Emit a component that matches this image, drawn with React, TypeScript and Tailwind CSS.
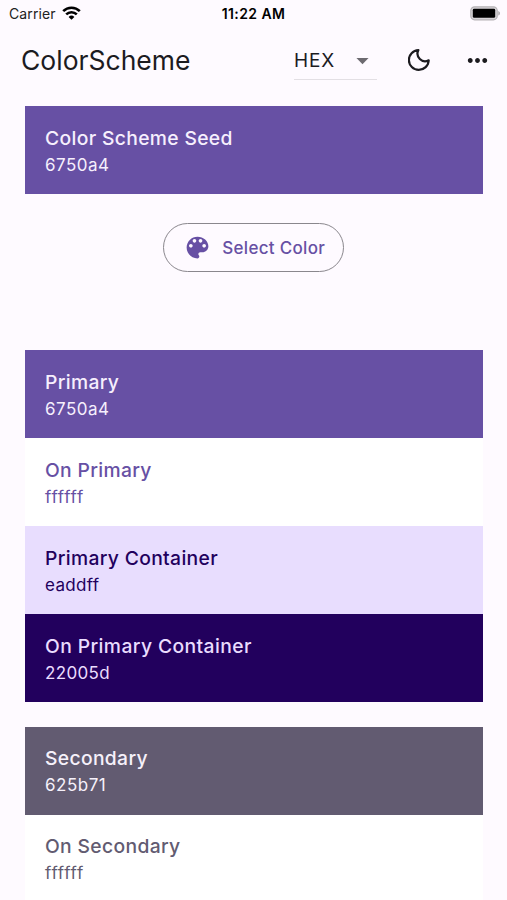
import { MdArrowDropDown, MdMoreHoriz } from "react-icons/md";

type Swatch = { label: string; hex: string; tone: string; spacing?: string; hexSpacing?: string; inset?: string };

const seed: Swatch = { label: "Color Scheme Seed", hex: "6750a4", tone: "bg-[#6750a4] text-[#f6effd]", hexSpacing: "tracking-[0.5px]" };

const primary: Swatch[] = [
  { label: "Primary", hex: "6750a4", tone: "bg-[#6750a4] text-[#f6effd]", hexSpacing: "tracking-[0.5px]" },
  { label: "On Primary", hex: "ffffff", tone: "bg-white text-[#6750a4]", hexSpacing: "tracking-[0.75px]" },
  { label: "Primary Container", hex: "eaddff", tone: "bg-[#e8ddfe] text-[#22005d]" },
  { label: "On Primary Container", hex: "22005d", tone: "bg-[#22005d] text-[#eaddff]", spacing: "tracking-[0.4px]" },
];

const secondary: Swatch[] = [
  { label: "Secondary", hex: "625b71", tone: "bg-[#625b71] text-[#f6f1fa]", hexSpacing: "tracking-[0.5px]", inset: "pt-[18px]" },
  { label: "On Secondary", hex: "ffffff", tone: "bg-white text-[#625b71]", hexSpacing: "tracking-[0.75px]", inset: "pt-[18px]" },
];

function SwatchRow({ swatch }: { swatch: Swatch }) {
  return (
    <div className={`flex h-[88px] shrink-0 flex-col pl-5 ${swatch.inset ?? "pt-[19px]"} ${swatch.tone}`}>
      <span className={`h-[27px] whitespace-nowrap text-[19.3px] font-medium leading-[26px] ${swatch.spacing ?? "tracking-[0.34px]"}`}>{swatch.label}</span>
      <span className={`h-6 whitespace-nowrap text-[17px] leading-[26px] ${swatch.hexSpacing ?? "tracking-[0.35px]"}`}>{swatch.hex}</span>
    </div>
  );
}

function PaletteIcon() {
  return (
    <svg className="mr-[10px] size-[29px] shrink-0" viewBox="0 0 24 24" fill="currentColor">
      <path d="M12 3c-4.97 0-9 4.03-9 9s4.03 9 9 9c.83 0 1.5-.67 1.5-1.5 0-.39-.15-.74-.39-1.01-.23-.26-.38-.61-.38-.99 0-.83.67-1.5 1.5-1.5H16c2.76 0 5-2.24 5-5 0-4.42-4.03-8-9-8zm-5.5 9c-.83 0-1.5-.67-1.5-1.5S5.67 9 6.5 9 8 9.67 8 10.5 7.33 12 6.5 12zm3-4C8.67 8 8 7.33 8 6.5S8.67 5 9.5 5s1.5.67 1.5 1.5S10.33 8 9.5 8zm5 0c-.83 0-1.5-.67-1.5-1.5S13.67 5 14.5 5s1.5.67 1.5 1.5S15.33 8 14.5 8zm3 4c-.83 0-1.5-.67-1.5-1.5S16.67 9 17.5 9s1.5.67 1.5 1.5-.67 1.5-1.5 1.5z" />
    </svg>
  );
}

function MoonIcon() {
  return (
    <svg className="-mt-[1px] mr-[33px] size-[22px] shrink-0" viewBox="0 0 22 22" fill="none" stroke="currentColor" strokeWidth="2.2">
      <path d="M10.4 1.1A7.6 7.6 0 0 0 20.7 11.3A9.9 9.9 0 1 1 10.4 1.1Z" strokeLinejoin="round" />
    </svg>
  );
}

function StatusBar() {
  return (
    <div className="grid h-7 grid-cols-[1fr_auto_1fr] items-center text-black">
      <div className="flex items-center gap-[6px] pl-[9px]">
        <span className="text-[14px] leading-5 tracking-[0.1px] text-[#222]">Carrier</span>
        <svg className="-mt-[2px]" width="19" height="14" viewBox="0 0 19 14" fill="none" stroke="#000" strokeWidth="2.6">
          <path d="M1.2 5.1a11.8 11.8 0 0 1 16.6 0" />
          <path d="M4.2 8.4a7.6 7.6 0 0 1 10.6 0" />
          <path d="M9.5 13.8 6.6 10.9a4.2 4.2 0 0 1 5.8 0Z" fill="#000" stroke="none" />
        </svg>
      </div>
      <span className="text-[14px] font-semibold leading-5 tracking-[0.4px]">11:22 AM</span>
      <div className="flex justify-end pr-[6px]">
        <svg className="-mt-[2px]" width="31" height="15" viewBox="0 0 31 15">
          <rect x="0.8" y="0.8" width="26.4" height="13" rx="3.8" fill="#d8d5d8" stroke="#b5b2b5" strokeWidth="1.2" />
          <rect x="2.8" y="2.8" width="22.4" height="9" rx="1.4" fill="#000" />
          <path d="M28.2 5v4.6c2.5-.8 2.5-3.8 0-4.6Z" fill="#b5b2b5" />
        </svg>
      </div>
    </div>
  );
}

export default function App() {
  return (
    <div className="flex h-[900px] w-[507px] flex-col overflow-hidden bg-[#fefaff] font-['Inter',sans-serif] text-[#1c1b1f]">
      <StatusBar />
      <header className="flex h-[64px] shrink-0 items-center pl-[21px] pr-[15px]">
        <h1 className="flex-1 whitespace-nowrap text-[26.5px] font-normal leading-8">ColorScheme</h1>
        <div className="mr-[31px] mt-[1px] flex h-[39px] w-[83px] items-center justify-between border-b border-[#e3dfe4]">
          <span className="pt-[2px] text-[19px] leading-7 tracking-[0.8px]">HEX</span>
          <MdArrowDropDown className="size-[29px] text-[#6d6a70]" />
        </div>
        <MoonIcon />
        <MdMoreHoriz className="size-[29px] shrink-0" />
      </header>
      <main className="flex flex-1 flex-col overflow-hidden pl-[25px] pr-[24.5px] pt-[14px]">
        <SwatchRow swatch={seed} />
        <button className="mb-[78px] mt-[29px] flex h-[49px] w-[181px] shrink-0 items-center self-center rounded-full border border-[#8a878d] pl-[19px] text-[#6750a4]">
          <PaletteIcon />
          <span className="whitespace-nowrap text-[17px] font-medium leading-6 tracking-[0.3px]">Select Color</span>
        </button>
        {primary.map((s) => <SwatchRow key={s.label} swatch={s} />)}
        <div className="h-[24.6px] shrink-0" />
        {secondary.map((s) => <SwatchRow key={s.label} swatch={s} />)}
      </main>
    </div>
  );
}
